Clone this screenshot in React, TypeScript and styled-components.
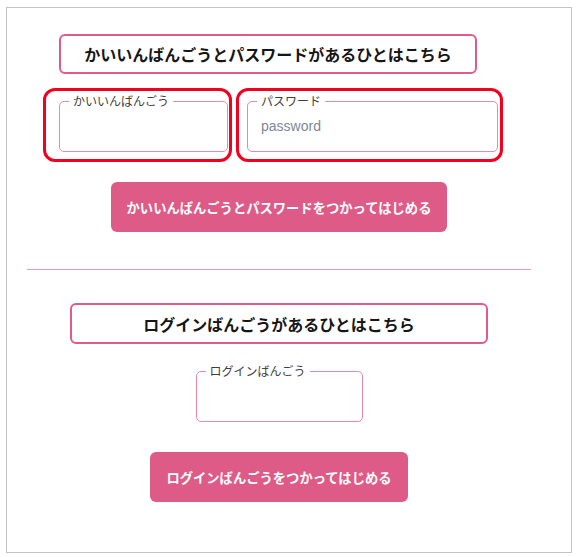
import styled, {createGlobalStyle} from "styled-components";

const GlobalStyle = createGlobalStyle`
    html, body {
        margin: 0;
        padding: 0;
        background: #ffffff;
    }
    body {
        font-family: "Liberation Sans", "Noto Sans CJK JP", sans-serif;
        color: #222;
    }
`;

const Frame = styled.div`
    box-sizing: border-box;
    margin: 7px 0 0 6px;
    width: 566px;
    height: 546px;
    border: 1px solid #c4c4c4;
    padding: 26px 0 0 20px;
`;

const Content = styled.div`
    width: 504px;
    display: flex;
    flex-direction: column;
    align-items: center;
`;

const SectionTitle = styled.div<{$indent?: number; $height: number}>`
    box-sizing: border-box;
    width: 418px;
    height: ${(p) => p.$height}px;
    align-self: ${(p) => (p.$indent !== undefined ? "flex-start" : "center")};
    margin-left: ${(p) => p.$indent ?? 0}px;
    border: 2px solid #e05c88;
    border-radius: 6px;
    display: flex;
    align-items: center;
    justify-content: center;
    font-family: "Noto Sans CJK JP", sans-serif;
    font-weight: 700;
    font-size: 16px;
    color: #161616;
`;

const InputRow = styled.div`
    align-self: flex-start;
    margin: 14px 0 0 16px;
    display: flex;
    gap: 4px;
`;

const Highlight = styled.div<{$width: number; $inset: number}>`
    box-sizing: border-box;
    width: ${(p) => p.$width}px;
    height: 74px;
    border: 3px solid #f2001f;
    border-radius: 12px;
    padding: 3px 0 0 ${(p) => p.$inset}px;
`;

const Field = styled.fieldset<{$width: number}>`
    box-sizing: border-box;
    width: ${(p) => p.$width}px;
    height: 58px;
    margin: 0;
    padding: 0 9px;
    border: 1px solid #e98aa8;
    border-radius: 5px;
`;

const Label = styled.legend`
    padding: 0 4px;
    font-family: "Noto Sans CJK JP", sans-serif;
    font-size: 12px;
    line-height: 14px;
    color: #3d3d3d;
`;

const TextInput = styled.input`
    display: block;
    box-sizing: border-box;
    width: 100%;
    height: 36px;
    margin: 0;
    padding: 0 4px;
    border: none;
    outline: none;
    background: transparent;
    font-family: "Liberation Sans", "Noto Sans CJK JP", sans-serif;
    font-size: 14px;
    color: #333;

    &::placeholder {
        color: #7d889b;
    }
`;

const StartButton = styled.button<{$top: number}>`
    box-sizing: border-box;
    height: 50px;
    margin-top: ${(p) => p.$top}px;
    padding: 0 16px;
    border: none;
    border-radius: 6px;
    background: #de5b87;
    color: #ffffff;
    font-family: "Noto Sans CJK JP", sans-serif;
    font-weight: 700;
    font-size: 13.3px;
    cursor: pointer;
`;

const Divider = styled.div`
    width: 100%;
    height: 1px;
    margin: 37px 0 33px;
    background: #ef9ab4;
`;

const LoginField = styled.div`
    margin-top: 20px;
`;

export default function App() {
    return (
        <>
            <GlobalStyle />
            <Frame>
                <Content>
                    <SectionTitle $indent={32} $height={40}>
                        かいいんばんごうとパスワードがあるひとはこちら
                    </SectionTitle>
                    <InputRow>
                        <Highlight $width={189} $inset={13}>
                            <Field $width={169}>
                                <Label>かいいんばんごう</Label>
                                <TextInput type="text" />
                            </Field>
                        </Highlight>
                        <Highlight $width={267} $inset={8}>
                            <Field $width={251}>
                                <Label>パスワード</Label>
                                <TextInput type="password" placeholder="password" />
                            </Field>
                        </Highlight>
                    </InputRow>
                    <StartButton $top={20}>かいいんばんごうとパスワードをつかってはじめる</StartButton>
                    <Divider />
                    <SectionTitle $height={41}>ログインばんごうがあるひとはこちら</SectionTitle>
                    <LoginField>
                        <Field $width={167}>
                            <Label>ログインばんごう</Label>
                            <TextInput type="text" />
                        </Field>
                    </LoginField>
                    <StartButton $top={30}>ログインばんごうをつかってはじめる</StartButton>
                </Content>
            </Frame>
        </>
    );
}
